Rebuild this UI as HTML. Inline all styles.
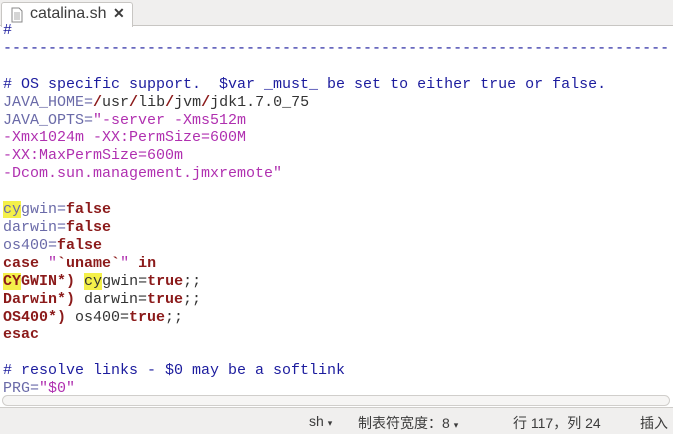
<!DOCTYPE html>
<html><head><meta charset="utf-8"><style>
*{margin:0;padding:0;box-sizing:border-box}
body{width:673px;height:434px;overflow:hidden;background:#fff;position:relative;font-family:"Liberation Sans","Noto Sans CJK SC",sans-serif}
#tabs{position:absolute;left:0;top:0;width:673px;height:26px;background:#f0efee;border-bottom:1px solid #c8c6c3}
#tab{position:absolute;left:1px;top:2px;width:132px;height:25px;background:#fff;border:1px solid #c8c6c3;border-bottom:none;border-radius:3px 3px 0 0;font-size:16px;color:#3c3c3c}
#code{position:absolute;left:3px;top:22px;font-family:"Liberation Mono",monospace;font-size:15px;line-height:17.9px;white-space:pre;color:#333}
.c{color:#1c1c9e}.v{color:#6a6aa8}.s{color:#b030b0}.k{color:#8b1a1a;font-weight:bold}.h{background:#f4f04a}
#hs{position:absolute;left:0;top:393px;width:673px;height:15px;background:#fff}
#hs div{position:absolute;left:2px;top:2px;width:668px;height:11px;border:1px solid #d0cecb;border-radius:6px;background:#f6f5f4}
#status{position:absolute;left:0;top:407px;width:673px;height:27px;background:#f0efee;border-top:1px solid #cfcdca;font-size:14px;color:#3c3c3c}
#status span{position:absolute;top:5px}
</style></head><body>
<div id="tabs"><div id="tab">
<svg style="position:absolute;left:9px;top:4px" width="12" height="16"><path d="M1 1h7l3 3v11H1z" fill="#fff" stroke="#888"/><path d="M3 6h6M3 8h6M3 10h6M3 12h6" stroke="#aaa"/></svg>
<span style="position:absolute;left:28px;top:2px">catalina.sh</span>
<span style="position:absolute;left:111px;top:2px;font-weight:bold;font-size:14px">✕</span>
</div></div>
<div id="code"><span class="c">#</span>
<span class="c">--------------------------------------------------------------------------</span>

<span class="c"># OS specific support.  $var _must_ be set to either true or false.</span>
<span class="v">JAVA_HOME=</span><span class="k">/</span>usr<span class="k">/</span>lib<span class="k">/</span>jvm<span class="k">/</span>jdk1.7.0_75
<span class="v">JAVA_OPTS=</span><span class="s">"-server -Xms512m</span>
<span class="s">-Xmx1024m -XX:PermSize=600M</span>
<span class="s">-XX:MaxPermSize=600m</span>
<span class="s">-Dcom.sun.management.jmxremote"</span>

<span class="v"><span class="h">cy</span>gwin=</span><span class="k">false</span>
<span class="v">darwin=</span><span class="k">false</span>
<span class="v">os400=</span><span class="k">false</span>
<span class="k">case</span> <span class="s">"</span><span class="k">`uname`</span><span class="s">"</span> <span class="k">in</span>
<span class="k"><span class="h">CY</span>GWIN*)</span> <span class="h">cy</span>gwin=<span class="k">true</span>;;
<span class="k">Darwin*)</span> darwin=<span class="k">true</span>;;
<span class="k">OS400*)</span> os400=<span class="k">true</span>;;
<span class="k">esac</span>

<span class="c"># resolve links - $0 may be a softlink</span>
<span class="v">PRG=</span><span class="s">"$0"</span></div>
<div id="hs"><div></div></div>
<div id="status">
<span style="left:309px">sh <small style="font-size:9px">▾</small></span>
<span style="left:358px">制表符宽度：8 <small style="font-size:9px">▾</small></span>
<span style="left:513px">行 117，列 24</span>
<span style="left:640px">插入</span>
</div>
</body></html>
